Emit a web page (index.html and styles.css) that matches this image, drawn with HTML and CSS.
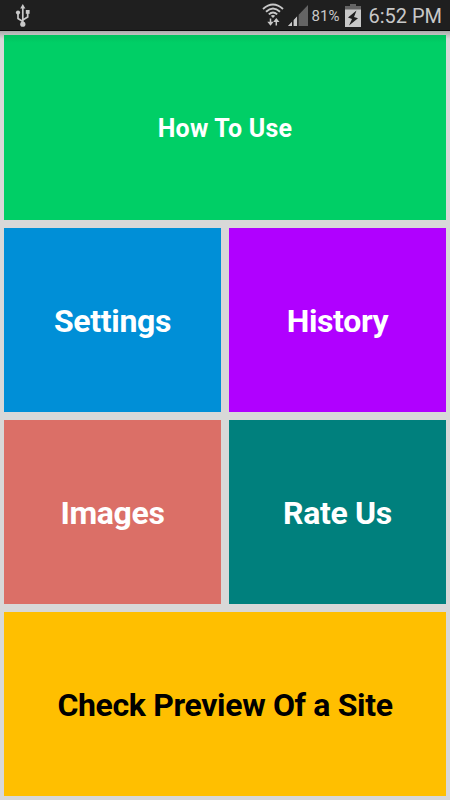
FILE: index.html
```html
<!DOCTYPE html>
<html lang="en">
<head>
    <meta charset="UTF-8">
    <title>Home</title>
    <meta name="viewport" content="width=device-width, initial-scale=1.0">
    <link rel="stylesheet" href="styles.css">
</head>
<body>
    <div class="status-bar">
        <svg class="usb" width="16" height="24" viewBox="0 0 16 24">
            <path d="M7.8 4v17M7.8 17.5L3 14.5V9M7.8 16l4.9-3V8" fill="none" stroke="#c8c8c8" stroke-width="1.7"/>
            <path d="M7.8 0l2.6 4.6H5.2z" fill="#c8c8c8"/>
            <circle cx="7.8" cy="20.2" r="2.6" fill="#c8c8c8"/>
            <circle cx="3" cy="8.6" r="2.1" fill="#c8c8c8"/>
            <rect x="10.8" y="6" width="3.8" height="3.8" fill="#c8c8c8"/>
        </svg>
        <div class="status-icons">
            <svg width="22" height="24" viewBox="0 0 22 24">
                <path d="M1 6Q11-2.8 21 6M4 8.8Q11 2.2 18 8.8M6.8 11.4Q11 7.4 15.2 11.4" fill="none" stroke="#c8c8c8" stroke-width="1.9"/>
                <path d="M8.8 12.8q2.2-1.6 4.4 0L11 15z" fill="#c8c8c8"/>
                <path d="M8.5 15.4v5M14.3 22.4v-5" fill="none" stroke="#c8c8c8" stroke-width="1.5"/>
                <path d="M5.3 18.8h6.4l-3.2 4zM11.1 19h6.4l-3.2-4z" fill="#c8c8c8"/>
            </svg>
            <svg class="signal" width="20" height="21" viewBox="0 0 20 21">
                <path d="M20 0v21H0z" fill="#646464"/>
                <path d="M0 21l4-4.2V21zM5.5 21v-5.8L9 11.5V21z" fill="#c8c8c8"/>
                <path d="M4.7 15v6M9.9 10v11" stroke="#1f1f1f" stroke-width="1.4"/>
            </svg>
            <span class="percent">81%</span>
            <svg class="battery" width="16" height="23" viewBox="0 0 16 23">
                <path d="M5 0h6v2h5v4H0V2h5z" fill="#646464"/>
                <path d="M0 5.5h16V23H0z" fill="#c8c8c8"/>
                <path d="M11.5 6.5L3 13.5l4 1.6L4 21.5l9-7.2-4-1.4z" fill="#1f1f1f"/>
            </svg>
            <span class="clock">6:52 PM</span>
        </div>
    </div>

    <div class="menu">
        <button class="tile wide how-to">How To Use</button>
        <button class="tile settings">Settings</button>
        <button class="tile history">History</button>
        <button class="tile images">Images</button>
        <button class="tile rate">Rate Us</button>
        <button class="tile wide preview">Check Preview Of a Site</button>
    </div>
</body>
</html>
```
FILE: styles.css
```css
body {
    font-family: Roboto, sans-serif;
    margin: 0;
    height: 100vh;
    display: flex;
    flex-direction: column;
    background: #d8d8d8;
    overflow: hidden;
}
.status-bar {
    height: 31px;
    flex: none;
    display: flex;
    justify-content: space-between;
    box-sizing: border-box;
    padding: 0 8px 0 15px;
    background: #1f1f1f;
    border-bottom: 1px solid #080808;
    color: #c8c8c8;
}
.usb {
    margin-top: 4px;
}
.status-icons {
    display: flex;
    align-items: flex-start;
    line-height: 32px;
}
.status-icons svg {
    margin-top: 3px;
}
.status-icons .signal {
    margin: 5px 4px 0 4px;
}
.status-icons .battery {
    margin: 4px 7px 0 6px;
}
.percent {
    font-size: 15px;
}
.clock {
    font-size: 20px;
}
.menu {
    flex: 1;
    display: grid;
    grid-template-columns: 1fr 1fr;
    grid-template-rows: 185px repeat(3, 1fr);
    gap: 8px;
    padding: 4px;
    background: linear-gradient(#aaa, #d8d8d8 8px);
}
.tile {
    border: none;
    padding: 1px 0 0;
    font-family: inherit;
    font-size: 32px;
    font-weight: bold;
    letter-spacing: -0.35px;
    color: #fff;
    cursor: pointer;
}
.wide {
    grid-column: span 2;
}
.how-to {
    font-size: 25px;
    letter-spacing: 0.25px;
    background: linear-gradient(#00c25e, #00cf66 8px);
}
.settings {
    background: #008fd7;
}
.history {
    background: #b000ff;
}
.images {
    background: #db6f67;
}
.rate {
    background: #00807d;
}
.preview {
    background: #ffbf00;
    color: #000;
}
```
